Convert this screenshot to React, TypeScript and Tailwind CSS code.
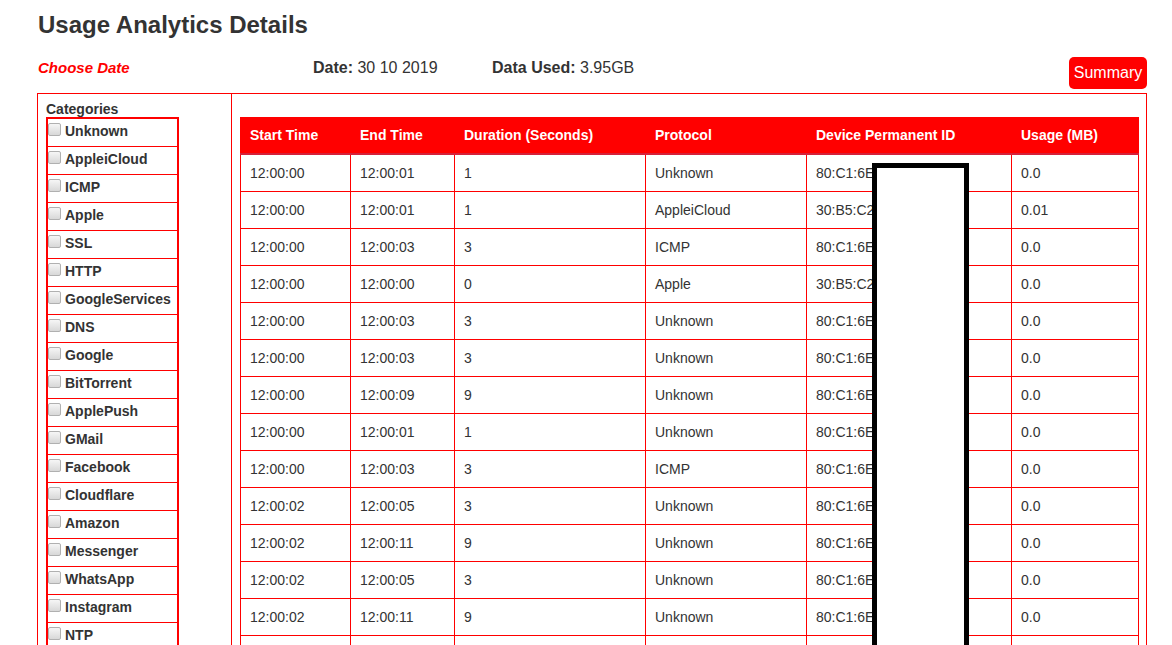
import React from "react";

const categories = [
  "Unknown","AppleiCloud","ICMP","Apple","SSL","HTTP","GoogleServices","DNS","Google","BitTorrent","ApplePush","GMail","Facebook","Cloudflare","Amazon","Messenger","WhatsApp","Instagram","NTP","YouTube","Twitter",
];

const rows: [string, string, string, string, string, string][] = [
  ["12:00:00","12:00:01","1","Unknown","80:C1:6E","0.0"],
  ["12:00:00","12:00:01","1","AppleiCloud","30:B5:C2","0.01"],
  ["12:00:00","12:00:03","3","ICMP","80:C1:6E","0.0"],
  ["12:00:00","12:00:00","0","Apple","30:B5:C2","0.0"],
  ["12:00:00","12:00:03","3","Unknown","80:C1:6E","0.0"],
  ["12:00:00","12:00:03","3","Unknown","80:C1:6E","0.0"],
  ["12:00:00","12:00:09","9","Unknown","80:C1:6E","0.0"],
  ["12:00:00","12:00:01","1","Unknown","80:C1:6E","0.0"],
  ["12:00:00","12:00:03","3","ICMP","80:C1:6E","0.0"],
  ["12:00:02","12:00:05","3","Unknown","80:C1:6E","0.0"],
  ["12:00:02","12:00:11","9","Unknown","80:C1:6E","0.0"],
  ["12:00:02","12:00:05","3","Unknown","80:C1:6E","0.0"],
  ["12:00:02","12:00:11","9","Unknown","80:C1:6E","0.0"],
  ["12:00:02","12:00:05","3","Unknown","80:C1:6E","0.0"],
  ["12:00:02","12:00:11","9","Unknown","80:C1:6E","0.0"],
];

const headers = ["Start Time","End Time","Duration (Seconds)","Protocol","Device Permanent ID","Usage (MB)"];
const widths = ["w-[110px]","w-[104px]","w-[191px]","w-[161px]","w-[205px]","w-[127px]"];

export default function App() {
  return (
    <div className="h-[645px] overflow-hidden bg-white pl-[37px] pr-[25px] text-[#333]" style={{ fontFamily: '"Liberation Sans", Arial, sans-serif' }}>
      <h1 className="ml-[1px] mt-[11px] text-[24px] font-bold leading-[28px] text-[#333]">Usage Analytics Details</h1>

      <div className="mt-[18px] flex h-[32px] items-start">
        <div className="ml-[1px] mt-[1px] w-[275px] text-[15px] font-bold italic leading-[20px] text-[#ff0000]">Choose Date</div>
        <div className="mt-[1px] w-[179px] text-[16px] leading-[20px]"><span className="font-bold">Date:</span> 30 10 2019</div>
        <div className="mt-[1px] flex-1 text-[16px] leading-[20px]"><span className="font-bold">Data Used:</span> 3.95GB</div>
        <button className="h-[32px] w-[78px] rounded-[5px] bg-[#ff0000] text-[16px] leading-[20px] text-white">Summary</button>
      </div>

      <div className="mt-[4px] flex border border-[#ff0000]">
        <div className="w-[194px] shrink-0 border-r border-[#ff0000] pl-[8px] pt-[7px]">
          <div className="text-[14px] font-bold leading-[16px] text-[#333]">Categories</div>
          <div className="w-[133px] border-2 border-[#ff0000]">
            {categories.map((c, i) => (
              <div key={c} className={`flex h-[28px] items-start ${i < categories.length - 1 ? "border-b border-[#ff0000]" : ""}`}>
                <span className="mt-[4px] inline-block h-[13px] w-[13px] shrink-0 rounded-[2px] border border-[#b0b0b0] bg-gradient-to-b from-[#f6f6f6] to-[#d8d8d8]" />
                <span className="ml-[4px] mt-[2px] text-[14px] font-bold leading-[20px] text-[#333]">{c}</span>
              </div>
            ))}
          </div>
        </div>

        <div className="relative flex-1 pl-[8px] pt-[23px]">
          <div className="w-[899px]">
            <div className="flex h-[38px] border-b-2 border-[#d5213a] bg-[#ff0000] pl-[1px]">
              {headers.map((h, i) => (
                <div key={h} className={`${widths[i]} flex items-center pl-[9px] text-[14px] font-bold text-white`}>{h}</div>
              ))}
            </div>
            {rows.map((r, ri) => (
              <div key={ri} className="flex h-[37px] border-b border-l border-[#ff0000]">
                {r.map((v, i) => (
                  <div key={i} className={`${widths[i]} flex items-center border-r border-[#ff0000] pl-[9px] text-[14px] text-[#333]`}>{v}</div>
                ))}
              </div>
            ))}
          </div>
          <div className="absolute left-[640px] top-[69px] h-[600px] w-[97px] border-[5px] border-black bg-white" />
        </div>
      </div>
    </div>
  );
}
